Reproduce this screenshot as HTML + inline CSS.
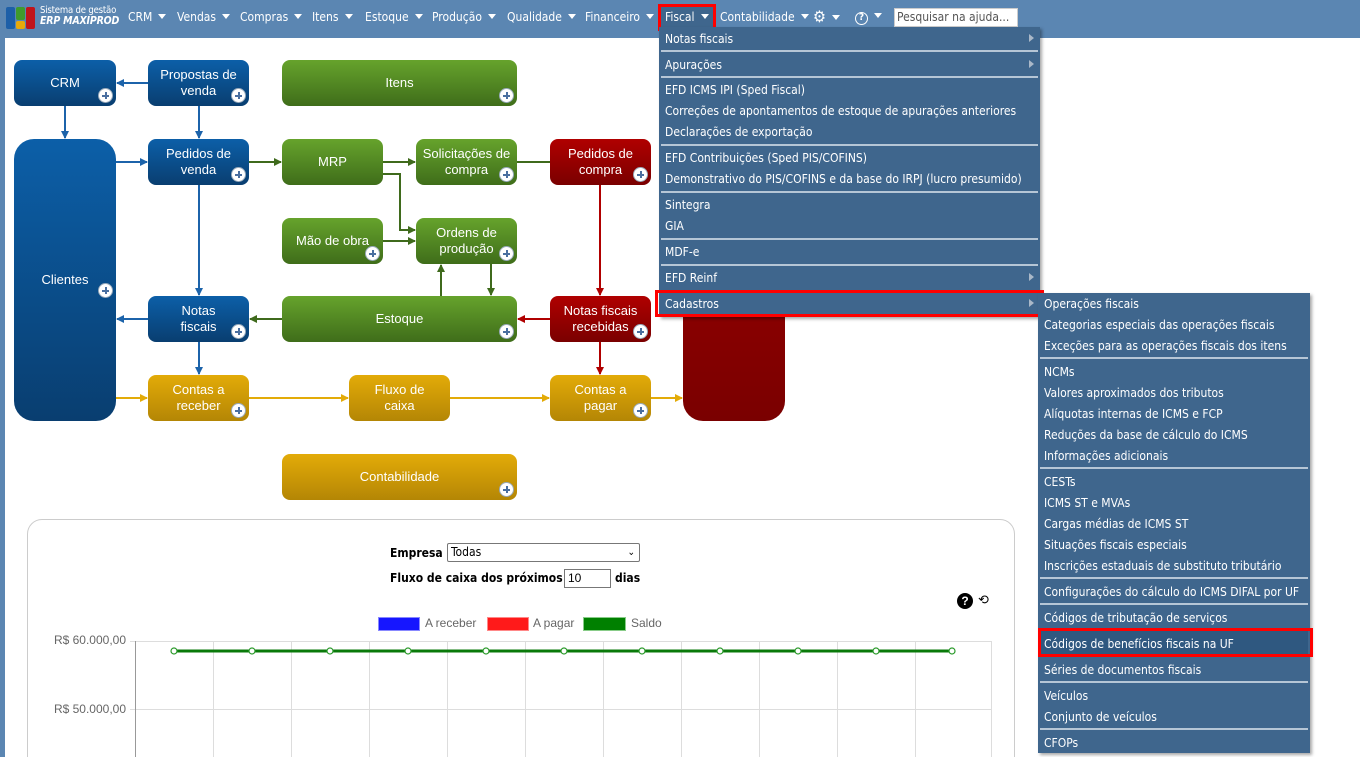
<!DOCTYPE html>
<html style="overflow:hidden;width:1360px;height:757px"><head><meta charset="utf-8"><style>
*{margin:0;padding:0;box-sizing:border-box}
html,body{overflow:hidden}
body{width:1360px;height:757px;overflow:hidden;background:#fff;font-family:"Liberation Sans",sans-serif;position:relative}
.top{position:absolute;left:0;top:0;width:1360px;height:38px;background:#5b86b2}
.stripe{position:absolute;left:0;top:38px;width:5px;height:719px;background:#5b86b2}
.nav{position:absolute;top:10px;color:#fff;font-size:12px;font-family:"DejaVu Sans Condensed","DejaVu Sans",sans-serif;white-space:nowrap}
.nav:after{content:"";display:inline-block;margin-left:6px;border-left:4px solid transparent;border-right:4px solid transparent;border-top:5px solid #fff;vertical-align:2px}
.b{position:absolute;color:#fff;font-size:13px;text-align:center;display:flex;align-items:center;justify-content:center;line-height:16px;border-radius:8px}
.bl{background:linear-gradient(#0c5fa8,#093e70)}
.gr{background:linear-gradient(#66a32c,#3f6d1a)}
.rd{background:linear-gradient(#b00000,#7a0000)}
.ye{background:linear-gradient(#e3ab08,#b48605)}
.p{position:absolute;right:3px;bottom:3px;width:15px;height:15px;border-radius:50%;background:#fff;border:1px solid #9ab}
.p:before{content:"";position:absolute;left:3px;top:6px;width:7px;height:1.6px;background:#4a6fa0}
.p:after{content:"";position:absolute;left:6px;top:3px;width:1.6px;height:7px;background:#4a6fa0}
.menu{position:absolute;background:#3f668d;box-shadow:2px 2px 3px rgba(0,0,0,.35);font-family:"DejaVu Sans Condensed","DejaVu Sans",sans-serif}
.mi{position:absolute;left:6px;height:21px;line-height:23px;color:#fff;font-size:12px;white-space:nowrap}
.sep{position:absolute;left:2px;right:2px;height:2px;background:#b6c6d6}
.arr{position:absolute;right:6px;width:0;height:0;border-top:4px solid transparent;border-bottom:4px solid transparent;border-left:5px solid #aab8c8}
.red{position:absolute;border:3px solid #f00}
</style></head><body>
<div class="top"></div><div class="stripe"></div>
<div style="position:absolute;left:6px;top:7px;width:9px;height:22px;background:#1d5fa8;border-radius:2px"></div>
<div style="position:absolute;left:16px;top:7px;width:9px;height:13px;background:#3f9a2c;border-radius:2px"></div>
<div style="position:absolute;left:16px;top:21px;width:9px;height:8px;background:#e8a90a;border-radius:2px"></div>
<div style="position:absolute;left:26px;top:7px;width:9px;height:22px;background:#c0141a;border-radius:2px"></div>
<div style="position:absolute;left:40px;top:5px;color:#fff;font-size:9.5px;font-family:'DejaVu Sans Condensed',sans-serif;line-height:11px;letter-spacing:-0.2px">Sistema de gestão<br><i style="font-size:10.5px;font-weight:bold">ERP MAXIPROD</i></div>
<div class="nav" style="left:128px">CRM</div>
<div class="nav" style="left:177px">Vendas</div>
<div class="nav" style="left:240px">Compras</div>
<div class="nav" style="left:312px">Itens</div>
<div class="nav" style="left:365px">Estoque</div>
<div class="nav" style="left:432px">Produção</div>
<div class="nav" style="left:507px">Qualidade</div>
<div class="nav" style="left:585px">Financeiro</div>
<div style="position:absolute;left:659px;top:5px;width:55px;height:26px;background:#3f668d"></div>
<div class="nav" style="left:665px">Fiscal</div>
<div class="nav" style="left:720px">Contabilidade</div>
<div class="nav" style="left:813px;font-size:16px;top:7px">⚙</div>
<div class="nav" style="left:855px;top:9px"><span style="display:inline-block;width:13px;height:13px;border:1.5px solid #fff;border-radius:50%;font-size:10px;line-height:10px;text-align:center;font-weight:bold">?</span></div>
<div style="position:absolute;left:894px;top:8px;width:124px;height:19px;background:#fff;border:1px solid #ccc;font-size:12px;color:#555;padding-left:2px;line-height:17px;font-family:'DejaVu Sans Condensed',sans-serif">Pesquisar na ajuda...</div>
<div class="red" style="left:658px;top:4px;width:58px;height:27px"></div>

<svg style="position:absolute;left:0;top:0" width="800" height="510">
<defs>
<marker id="mb" markerWidth="8" markerHeight="8" refX="7" refY="4" orient="auto" markerUnits="userSpaceOnUse"><path d="M0,0 L8,4 L0,8z" fill="#1c63aa"/></marker>
<marker id="mg" markerWidth="8" markerHeight="8" refX="7" refY="4" orient="auto" markerUnits="userSpaceOnUse"><path d="M0,0 L8,4 L0,8z" fill="#3f6a1c"/></marker>
<marker id="mr" markerWidth="8" markerHeight="8" refX="7" refY="4" orient="auto" markerUnits="userSpaceOnUse"><path d="M0,0 L8,4 L0,8z" fill="#b00000"/></marker>
<marker id="my" markerWidth="8" markerHeight="8" refX="7" refY="4" orient="auto" markerUnits="userSpaceOnUse"><path d="M0,0 L8,4 L0,8z" fill="#e3ab08"/></marker>
</defs>
<g stroke="#1c63aa" stroke-width="2" fill="none" marker-end="url(#mb)">
<path d="M148 83H117"/><path d="M65 106V138"/><path d="M116 162H147"/><path d="M199 106V138"/><path d="M199 185V295"/><path d="M148 319H117"/><path d="M199 342V374"/>
</g>
<g stroke="#3f6a1c" stroke-width="2" fill="none" marker-end="url(#mg)">
<path d="M249 162H281"/><path d="M383 162H415"/><path d="M383 174H400V230H415"/><path d="M383 241H415"/><path d="M441 296V265"/><path d="M491 264V295"/><path d="M282 319H250"/>
</g>
<path d="M517 162H550" stroke="#3f6a1c" stroke-width="2"/>
<g stroke="#b00000" stroke-width="2" fill="none" marker-end="url(#mr)">
<path d="M600 185V295"/><path d="M550 319H518"/><path d="M600 342V374"/>
</g>
<g stroke="#e3ab08" stroke-width="2" fill="none" marker-end="url(#my)">
<path d="M116 398H147"/><path d="M249 398H348"/><path d="M450 398H549"/><path d="M651 398H682"/>
</g>
</svg>

<div class="b bl" style="left:14px;top:60px;width:102px;height:46px">CRM<i class="p"></i></div>
<div class="b bl" style="left:148px;top:60px;width:101px;height:46px">Propostas de<br>venda<i class="p"></i></div>
<div class="b gr" style="left:282px;top:60px;width:235px;height:46px">Itens<i class="p"></i></div>
<div class="b bl" style="left:14px;top:139px;width:102px;height:282px;border-radius:20px">Clientes<i class="p" style="bottom:auto;top:144px"></i></div>
<div class="b bl" style="left:148px;top:139px;width:101px;height:46px">Pedidos de<br>venda<i class="p"></i></div>
<div class="b gr" style="left:282px;top:139px;width:101px;height:46px">MRP</div>
<div class="b gr" style="left:416px;top:139px;width:101px;height:46px">Solicitações de<br>compra<i class="p"></i></div>
<div class="b rd" style="left:550px;top:139px;width:101px;height:46px">Pedidos de<br>compra<i class="p"></i></div>
<div class="b gr" style="left:282px;top:218px;width:101px;height:46px">Mão de obra<i class="p"></i></div>
<div class="b gr" style="left:416px;top:218px;width:101px;height:46px">Ordens de<br>produção<i class="p"></i></div>
<div class="b bl" style="left:148px;top:296px;width:101px;height:46px">Notas<br>fiscais<i class="p"></i></div>
<div class="b gr" style="left:282px;top:296px;width:235px;height:46px">Estoque<i class="p"></i></div>
<div class="b rd" style="left:550px;top:296px;width:101px;height:46px">Notas fiscais<br>recebidas<i class="p"></i></div>
<div class="b rd" style="left:683px;top:139px;width:102px;height:282px;border-radius:20px;background:linear-gradient(#a00000,#7a0000)"></div>
<div class="b ye" style="left:148px;top:375px;width:101px;height:46px">Contas a<br>receber<i class="p"></i></div>
<div class="b ye" style="left:349px;top:375px;width:101px;height:46px">Fluxo de<br>caixa</div>
<div class="b ye" style="left:550px;top:375px;width:101px;height:46px">Contas a<br>pagar<i class="p"></i></div>
<div class="b ye" style="left:282px;top:454px;width:235px;height:46px">Contabilidade<i class="p"></i></div>

<div style="position:absolute;left:27px;top:519px;width:988px;height:260px;border:1px solid #ccc;border-radius:15px"></div>
<div style="position:absolute;left:390px;top:546px;font-size:12px;font-weight:bold;font-family:'DejaVu Sans Condensed',sans-serif">Empresa</div>
<div style="position:absolute;left:447px;top:543px;width:193px;height:19px;border:1px solid #777;border-radius:2px;font-size:12px;padding-left:3px;line-height:17px;font-family:'DejaVu Sans Condensed',sans-serif">Todas<span style="position:absolute;right:4px;font-size:10px">&#8964;</span></div>
<div style="position:absolute;left:390px;top:571px;font-size:12px;font-weight:bold;font-family:'DejaVu Sans Condensed',sans-serif">Fluxo de caixa dos próximos</div>
<div style="position:absolute;left:564px;top:569px;width:47px;height:19px;border:1px solid #777;font-size:12px;padding-left:3px;line-height:17px">10</div>
<div style="position:absolute;left:615px;top:571px;font-size:12px;font-weight:bold;font-family:'DejaVu Sans Condensed',sans-serif">dias</div>
<div style="position:absolute;left:957px;top:593px;width:16px;height:16px;border-radius:50%;background:#000;color:#fff;font-size:12px;font-weight:bold;text-align:center;line-height:16px">?</div>
<div style="position:absolute;left:978px;top:592px;font-size:13px">⟲</div>
<div style="position:absolute;left:378px;top:617px;width:42px;height:14px;background:#1616ff;border:1px solid #88f"></div>
<div style="position:absolute;left:425px;top:616px;font-size:12px;color:#666">A receber</div>
<div style="position:absolute;left:487px;top:617px;width:42px;height:14px;background:#ff1a1a;border:1px solid #f88"></div>
<div style="position:absolute;left:533px;top:616px;font-size:12px;color:#666">A pagar</div>
<div style="position:absolute;left:583px;top:617px;width:43px;height:14px;background:#008000;border:1px solid #8c8"></div>
<div style="position:absolute;left:631px;top:616px;font-size:12px;color:#666">Saldo</div>
<div style="position:absolute;left:40px;width:86px;text-align:right;top:633px;font-size:12px;color:#666">R$ 60.000,00</div>
<div style="position:absolute;left:40px;width:86px;text-align:right;top:702px;font-size:12px;color:#666">R$ 50.000,00</div>
<svg style="position:absolute;left:0;top:630px" width="1000" height="127">
<g stroke="#ddd" stroke-width="1">
<path d="M130 11.5H991M130 79.5H991"/>
<path d="M213.5 11V127M291.5 11V127M369.5 11V127M447.5 11V127M525.5 11V127M603.5 11V127M681.5 11V127M759.5 11V127M837.5 11V127M915.5 11V127M991.5 11V127"/>
</g>
<path d="M135.5 11V127" stroke="#999"/>
<path d="M174 21H952" stroke="#0a7a0a" stroke-width="3"/>
<g fill="#fff" stroke="#2a9a2a" stroke-width="1.2">
<circle cx="174" cy="21" r="3"/><circle cx="252" cy="21" r="3"/><circle cx="330" cy="21" r="3"/><circle cx="408" cy="21" r="3"/><circle cx="486" cy="21" r="3"/><circle cx="564" cy="21" r="3"/><circle cx="642" cy="21" r="3"/><circle cx="720" cy="21" r="3"/><circle cx="798" cy="21" r="3"/><circle cx="876" cy="21" r="3"/><circle cx="952" cy="21" r="3"/>
</g>
</svg>

<div class="menu" style="left:659px;top:27px;width:381px;height:290px">
<div class="mi" style="top:1px">Notas fiscais</div><div class="arr" style="top:7px"></div>
<div class="sep" style="top:23px"></div>
<div class="mi" style="top:27px">Apurações</div><div class="arr" style="top:33px"></div>
<div class="sep" style="top:49px"></div>
<div class="mi" style="top:52px">EFD ICMS IPI (Sped Fiscal)</div>
<div class="mi" style="top:73px">Correções de apontamentos de estoque de apurações anteriores</div>
<div class="mi" style="top:94px">Declarações de exportação</div>
<div class="sep" style="top:117px"></div>
<div class="mi" style="top:120px">EFD Contribuições (Sped PIS/COFINS)</div>
<div class="mi" style="top:141px">Demonstrativo do PIS/COFINS e da base do IRPJ (lucro presumido)</div>
<div class="sep" style="top:164px"></div>
<div class="mi" style="top:167px">Sintegra</div>
<div class="mi" style="top:188px">GIA</div>
<div class="sep" style="top:211px"></div>
<div class="mi" style="top:214px">MDF-e</div>
<div class="sep" style="top:237px"></div>
<div class="mi" style="top:240px">EFD Reinf</div><div class="arr" style="top:246px"></div>
<div class="sep" style="top:263px"></div>
<div class="mi" style="top:266px">Cadastros</div><div class="arr" style="top:272px"></div>
</div>
<div class="red" style="left:655px;top:290px;width:389px;height:27px"></div>

<div class="menu" style="left:1038px;top:293px;width:272px;height:460px">
<div class="mi" style="top:0px">Operações fiscais</div>
<div class="mi" style="top:21px">Categorias especiais das operações fiscais</div>
<div class="mi" style="top:42px">Exceções para as operações fiscais dos itens</div>
<div class="sep" style="top:64px"></div>
<div class="mi" style="top:68px">NCMs</div>
<div class="mi" style="top:89px">Valores aproximados dos tributos</div>
<div class="mi" style="top:110px">Alíquotas internas de ICMS e FCP</div>
<div class="mi" style="top:131px">Reduções da base de cálculo do ICMS</div>
<div class="mi" style="top:152px">Informações adicionais</div>
<div class="sep" style="top:174px"></div>
<div class="mi" style="top:178px">CESTs</div>
<div class="mi" style="top:199px">ICMS ST e MVAs</div>
<div class="mi" style="top:220px">Cargas médias de ICMS ST</div>
<div class="mi" style="top:241px">Situações fiscais especiais</div>
<div class="mi" style="top:262px">Inscrições estaduais de substituto tributário</div>
<div class="sep" style="top:284px"></div>
<div class="mi" style="top:288px">Configurações do cálculo do ICMS DIFAL por UF</div>
<div class="sep" style="top:310px"></div>
<div class="mi" style="top:314px">Códigos de tributação de serviços</div>
<div class="sep" style="top:336px"></div>
<div style="position:absolute;left:2px;right:2px;top:338px;height:24px;background:#2f5880"></div>
<div class="mi" style="top:340px">Códigos de benefícios fiscais na UF</div>
<div class="sep" style="top:362px"></div>
<div class="mi" style="top:366px">Séries de documentos fiscais</div>
<div class="sep" style="top:388px"></div>
<div class="mi" style="top:392px">Veículos</div>
<div class="mi" style="top:413px">Conjunto de veículos</div>
<div class="sep" style="top:435px"></div>
<div class="mi" style="top:439px">CFOPs</div>
</div>
<div class="red" style="left:1038px;top:628px;width:275px;height:29px"></div>
</body></html>
